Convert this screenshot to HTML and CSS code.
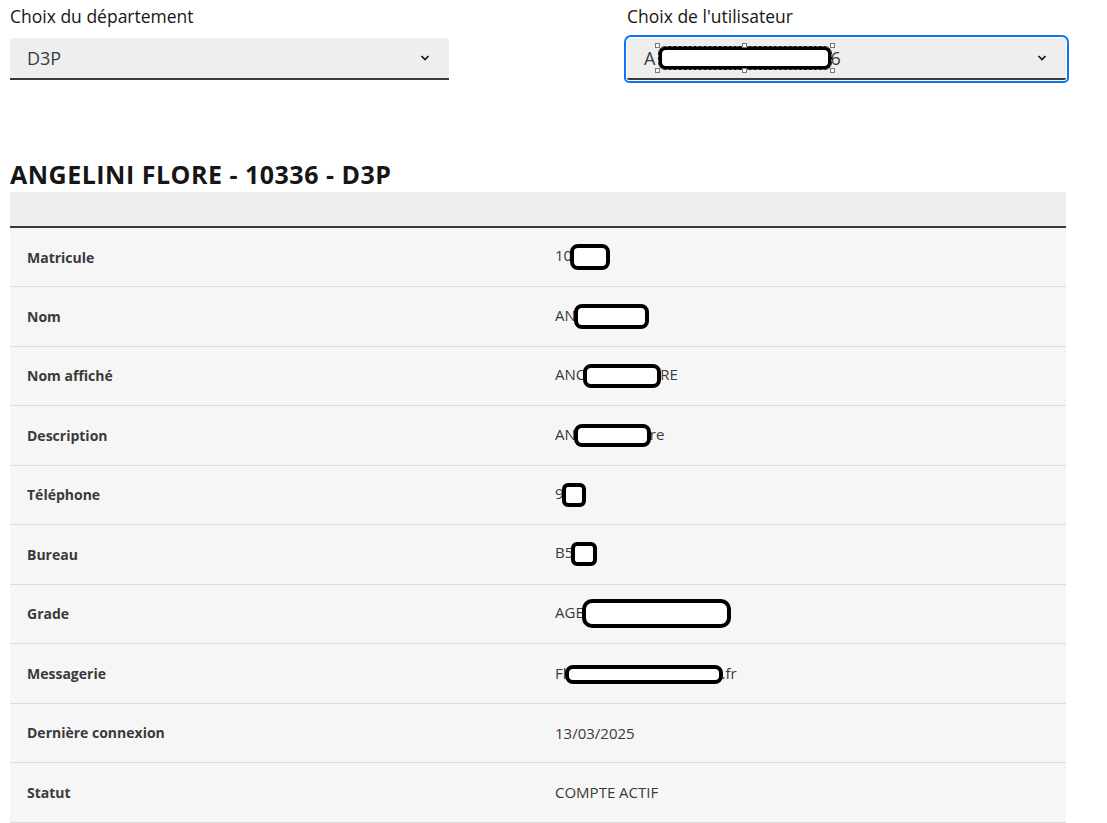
FILE: index.html
```html
<!DOCTYPE html>
<html lang="fr">
<head>
<meta charset="utf-8">
<title>Utilisateur</title>
<link rel="stylesheet" href="styles.css">
</head>
<body>
<div class="page">
  <div class="selects">
    <div class="field">
      <label class="label">Choix du département</label>
      <div class="select">
        <span class="select-value">D3P</span>
        <svg class="chevron" width="12" height="8" viewBox="0 0 12 8"><path d="M2.5 2 L6 5.5 L9.5 2" fill="none" stroke="#161616" stroke-width="1.7"/></svg>
      </div>
    </div>
    <div class="field">
      <label class="label">Choix de l'utilisateur</label>
      <div class="select focused">
        <span class="select-value">A<span class="redact redact-sel"><i class="h h1"></i><i class="h h2"></i><i class="h h3"></i><i class="h h4"></i><i class="h h5"></i><i class="h h6"></i></span>6</span>
        <svg class="chevron" width="12" height="8" viewBox="0 0 12 8"><path d="M2.5 2 L6 5.5 L9.5 2" fill="none" stroke="#161616" stroke-width="1.7"/></svg>
      </div>
    </div>
  </div>

  <h2 class="title">ANGELINI FLORE - 10336 - D3P</h2>

  <table class="info">
    <thead>
      <tr><th></th><th></th></tr>
    </thead>
    <tbody>
      <tr><td class="k">Matricule</td><td class="v">10<span class="redact r-mat"></span></td></tr>
      <tr><td class="k">Nom</td><td class="v">AN<span class="redact r-nom"></span></td></tr>
      <tr><td class="k">Nom affiché</td><td class="v">ANC<span class="redact r-aff"></span>RE</td></tr>
      <tr><td class="k">Description</td><td class="v">AN<span class="redact r-desc"></span>re</td></tr>
      <tr><td class="k">Téléphone</td><td class="v">9<span class="redact r-tel"></span></td></tr>
      <tr><td class="k">Bureau</td><td class="v">B5<span class="redact r-bur"></span></td></tr>
      <tr><td class="k">Grade</td><td class="v">AGE<span class="redact r-grade"></span></td></tr>
      <tr><td class="k">Messagerie</td><td class="v">Fl<span class="redact r-mail"></span>.fr</td></tr>
      <tr><td class="k">Dernière connexion</td><td class="v">13/03/2025</td></tr>
      <tr><td class="k">Statut</td><td class="v">COMPTE ACTIF</td></tr>
    </tbody>
  </table>
</div>
</body>
</html>
```

FILE: styles.css
```css
* { box-sizing: border-box; }
body {
  margin: 0;
  background: #ffffff;
  font-family: "Open Sans", "Noto Sans", sans-serif;
  color: #161616;
}
.page {
  width: 1056px;
  margin-left: 10px;
  padding-top: 4px;
}
.selects {
  display: flex;
  justify-content: space-between;
}
.field {
  width: 439px;
  display: flex;
  flex-direction: column;
}
.label {
  font-size: 17.5px;
  line-height: 24px;
  margin-bottom: 10px;
  color: #161616;
}
.select {
  height: 42px;
  background: #eeeeee;
  border-radius: 4px 4px 0 0;
  border-bottom: 2px solid #3a3a3a;
  display: flex;
  align-items: center;
  justify-content: space-between;
  padding: 0 18px 0 17px;
  font-size: 18px;
}
.select.focused {
  outline: 2px solid #0a76f6;
  outline-offset: 1px;
  border-radius: 4px 4px 2px 2px;
}
.select-value {
  display: inline-flex;
  align-items: center;
  color: #3a3a3a;
}
.chevron { display: block; }

.redact {
  display: inline-block;
  background: #ffffff;
  border: 4px solid #000000;
  border-radius: 8px;
  position: relative;
  vertical-align: middle;
}
.redact-sel {
  width: 174px;
  height: 24px;
  margin-left: 3px;
  margin-right: -2px;
  outline: 1px dashed #6a6a6a;
  outline-offset: -1px;
}
.h {
  position: absolute;
  width: 5px;
  height: 5px;
  background: #ffffff;
  border: 1px solid #777777;
}
.h1 { left: -7px; top: -7px; }
.h2 { left: 80px; top: -7px; }
.h3 { right: -7px; top: -7px; }
.h4 { left: -7px; bottom: -7px; }
.h5 { left: 80px; bottom: -7px; }
.h6 { right: -7px; bottom: -7px; }

.title {
  margin: 76px 0 0 0;
  font-size: 25px;
  line-height: 36px;
  height: 36px;
  font-weight: 700;
  letter-spacing: 0.5px;
  color: #161616;
}
.info {
  width: 100%;
  border-collapse: collapse;
  table-layout: fixed;
  font-size: 14px;
}
.info thead th {
  height: 35px;
  background: #eeeeee;
  border-bottom: 2px solid #3a3a3a;
  padding: 0;
}
.info tbody tr {
  background: #f6f6f6;
  border-bottom: 1px solid #dddddd;
}
.info td {
  height: 59.5px;
  padding: 0 16px 0 17px;
  vertical-align: middle;
}
.k {
  font-weight: 700;
  color: #3a3a3a;
}
.v {
  color: #3a3a3a;
  font-size: 15px;
}
.v .redact { margin-left: -2px; margin-right: -1px; }
.r-mat { width: 40px; height: 26px; }
.r-nom { width: 75px; height: 25px; }
.r-aff { width: 78px; height: 24px; }
.r-desc { width: 77px; height: 23px; }
.r-tel { width: 24px; height: 24px; border-radius: 6px; }
.r-bur { width: 26px; height: 24px; border-radius: 6px; }
.r-grade { width: 149px; height: 29px; border-radius: 10px; }
.r-mail { width: 158px; height: 19px; border-radius: 8px; }
```
